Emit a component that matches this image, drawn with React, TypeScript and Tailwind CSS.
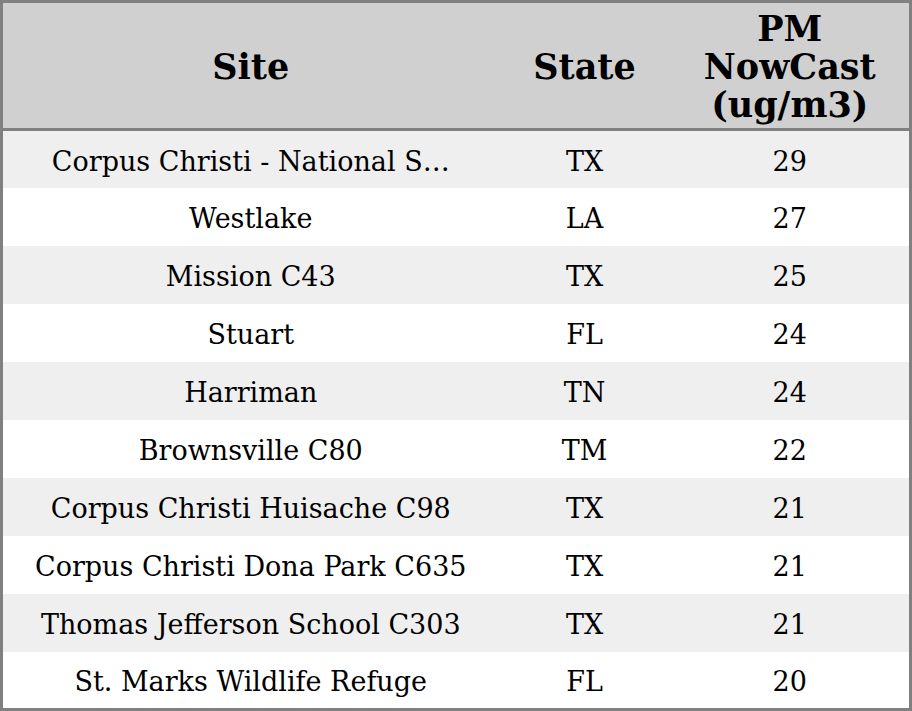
import React from "react";

type Row = { site: string; state: string; pm: number };

const rows: Row[] = [
  { site: "Corpus Christi - National S…", state: "TX", pm: 29 },
  { site: "Westlake", state: "LA", pm: 27 },
  { site: "Mission C43", state: "TX", pm: 25 },
  { site: "Stuart", state: "FL", pm: 24 },
  { site: "Harriman", state: "TN", pm: 24 },
  { site: "Brownsville C80", state: "TM", pm: 22 },
  { site: "Corpus Christi Huisache C98", state: "TX", pm: 21 },
  { site: "Corpus Christi Dona Park C635", state: "TX", pm: 21 },
  { site: "Thomas Jefferson School C303", state: "TX", pm: 21 },
  { site: "St. Marks Wildlife Refuge", state: "FL", pm: 20 },
];

export default function App() {
  return (
    <div className="h-[711px] w-[912px] bg-white font-['DejaVu_Serif',serif] text-black">
      <table className="h-full w-full table-fixed border-collapse border-[3px] border-[#808080]">
        <colgroup>
          <col className="w-[497px]" />
          <col className="w-[172px]" />
          <col />
        </colgroup>
        <thead>
          <tr className="h-[128px] border-b-[3px] border-[#808080] bg-[#d0d0d0] text-[35px] font-bold leading-[38px]">
            <th className="px-2 pt-[2px] text-center">Site</th>
            <th className="px-2 pt-[2px] text-center">State</th>
            <th className="px-2 pt-[2px] text-center">
              PM
              <br />
              NowCast
              <br />
              (ug/m3)
            </th>
          </tr>
        </thead>
        <tbody className="text-[27px]">
          {rows.map((r, i) => (
            <tr key={i} className={`h-[57.7px] ${i % 2 === 0 ? "bg-[#efefef]" : "bg-white"}`}>
              <td className="whitespace-nowrap px-2 pt-[5px] text-center">{r.site}</td>
              <td className="px-2 pt-[5px] text-center">{r.state}</td>
              <td className="px-2 pt-[5px] text-center">{r.pm}</td>
            </tr>
          ))}
        </tbody>
      </table>
    </div>
  );
}
